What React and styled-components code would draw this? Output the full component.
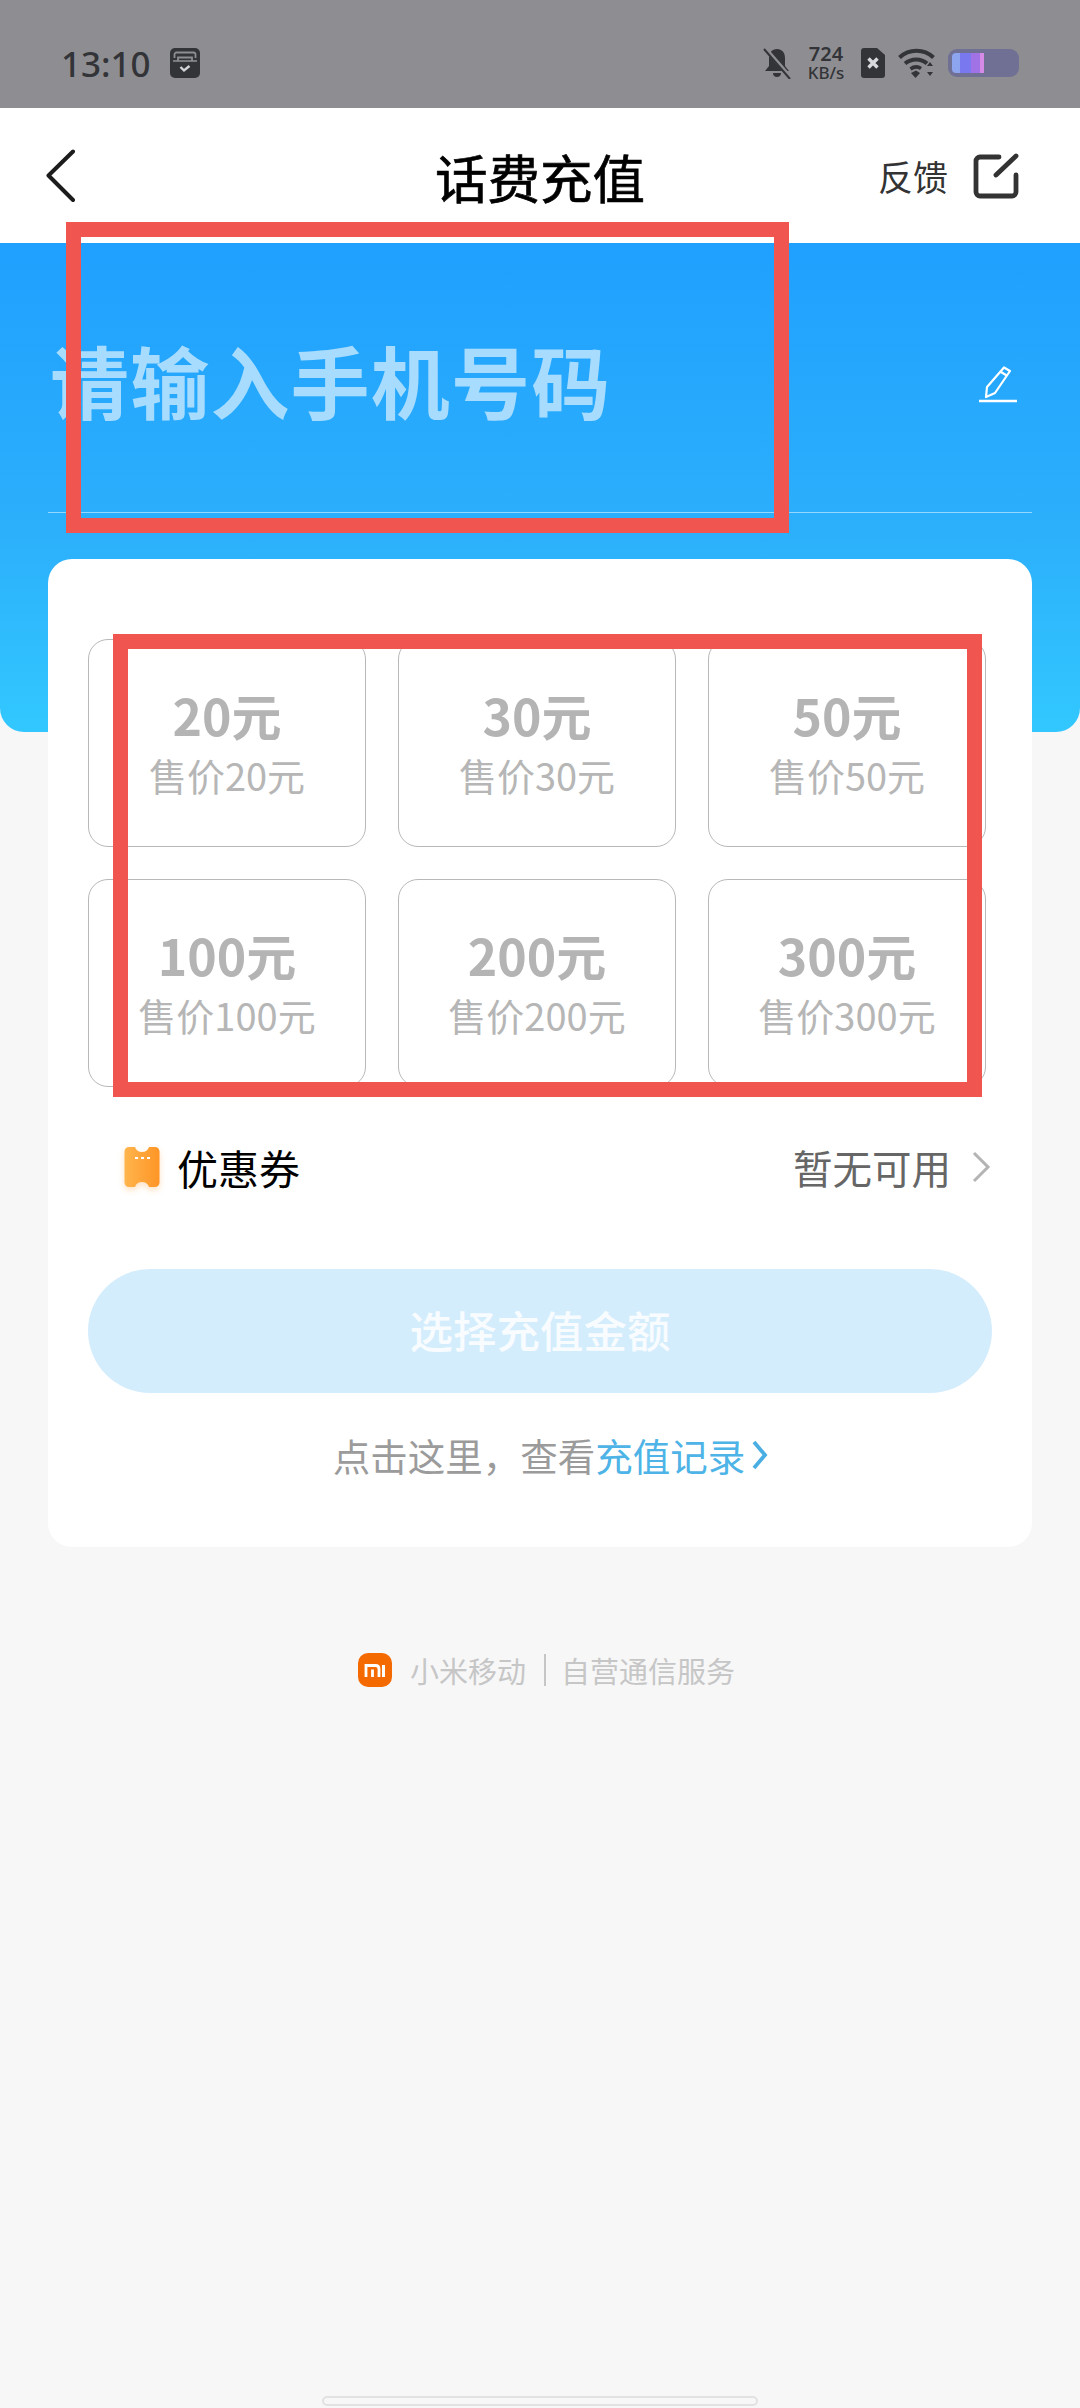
import styled, { createGlobalStyle } from 'styled-components';

const GlobalStyle = createGlobalStyle`
  html, body {
    margin: 0;
    padding: 0;
    background: #f7f7f8;
    font-family: "Noto Sans CJK SC", "Noto Sans", sans-serif;
  }
  * {
    box-sizing: border-box;
  }
`;

const AMOUNTS = [20, 30, 50, 100, 200, 300];

function TopupApp() {
  return (
    <Page>
      <GlobalStyle />
      <StatusBar>
        <StatusLeft>
          <Clock>13:10</Clock>
          <CalendarGlyph />
        </StatusLeft>
        <StatusRight>
          <MutedBell />
          <NetSpeed>
            <strong>724</strong>
            <span>KB/s</span>
          </NetSpeed>
          <SimGlyph />
          <WifiGlyph />
          <Battery>
            <BatteryFill />
          </Battery>
        </StatusRight>
      </StatusBar>

      <NavBar>
        <BackButton>
          <svg width="30" height="54" viewBox="0 0 30 54" fill="none">
            <path
              d="M27 2.500 2.500 26.500 27 51"
              stroke="#1c1c1c"
              strokeWidth="4"
              strokeLinecap="round"
              strokeLinejoin="round"
            />
          </svg>
        </BackButton>
        <NavTitle>话费充值</NavTitle>
        <NavAction>
          <span>反馈</span>
          <svg width="46" height="46" viewBox="0 0 46 46" fill="none">
            <path
              d="M26 4H7a4 4 0 0 0-4 4v31a4 4 0 0 0 4 4h32a4 4 0 0 0 4-4V22"
              stroke="#333"
              strokeWidth="4.800"
              strokeLinecap="round"
            />
            <path d="M23 22 43 3" stroke="#333" strokeWidth="4.800" strokeLinecap="round" />
          </svg>
        </NavAction>
      </NavBar>

      <Hero>
        <PhoneRow>
          <PhonePlaceholder>请输入手机号码</PhonePlaceholder>
          <PencilIcon width="40" height="38" viewBox="0 0 40 38" fill="none">
            <path
              d="M26 2.500 32 6 17 28l-9 4 1-10L26 2.500ZM23 7l6.500 4"
              stroke="#fff"
              strokeWidth="2.200"
              strokeLinejoin="round"
            />
            <path d="M1 36h38" stroke="#fff" strokeWidth="2.600" />
          </PencilIcon>
        </PhoneRow>
        <HeroDivider />
      </Hero>

      <Card>
        <AmountGrid>
          {AMOUNTS.map((value) => (
            <AmountTile key={value}>
              <AmountValue>{value}元</AmountValue>
              <AmountPrice>售价{value}元</AmountPrice>
            </AmountTile>
          ))}
        </AmountGrid>

        <CouponRow>
          <CouponLabel>
            <TicketIcon width="36" height="42" viewBox="0 0 36 42" fill="none">
              <defs>
                <linearGradient id="ticket" x1="0" y1="0" x2="1" y2="0">
                  <stop offset="0" stopColor="#ffb54d" />
                  <stop offset="1" stopColor="#ff9526" />
                </linearGradient>
              </defs>
              <path
                d="M5 1h6c1 3.500 3.500 5 7 5s6-1.500 7-5h6c2.500 0 4.500 2 4.500 4.500v31c0 2.500-2 4.500-4.500 4.500h-6c-1-3.500-3.500-5-7-5s-6 1.500-7 5H5c-2.500 0-4.500-2-4.500-4.500v-31C.5 3 2.500 1 5 1Z"
                fill="url(#ticket)"
              />
              <path d="M11 12h3M17 12h3M23 12h3" stroke="#fff" strokeWidth="2" />
            </TicketIcon>
            <span>优惠券</span>
          </CouponLabel>
          <CouponValue>
            <span>暂无可用</span>
            <svg width="20" height="32" viewBox="0 0 20 32" fill="none">
              <path d="m3 2 14 14L3 30" stroke="#b4b4b4" strokeWidth="3" />
            </svg>
          </CouponValue>
        </CouponRow>

        <SubmitButton type="button">选择充值金额</SubmitButton>

        <HistoryLine>
          点击这里，查看<HistoryLink>充值记录</HistoryLink>
          <svg width="17" height="32" viewBox="0 0 17 32" fill="none">
            <path d="m3 3 11 13L3 29" stroke="#4aaee2" strokeWidth="3.800" />
          </svg>
        </HistoryLine>
      </Card>

      <Footer>
        <svg width="34" height="34" viewBox="0 0 34 34">
          <rect width="34" height="34" rx="10" fill="#f56a00" />
          <path
            d="M8 24V12.500h9.500c2.200 0 3.500 1.300 3.500 3.500v8M14.500 24v-7.500"
            fill="none"
            stroke="#fff"
            strokeWidth="2.800"
          />
          <path d="M25.500 12v12" stroke="#fff" strokeWidth="3" />
        </svg>
        <FooterText>小米移动</FooterText>
        <FooterBar />
        <FooterText>自营通信服务</FooterText>
      </Footer>

      <HomeIndicator />

      {/* red markup boxes drawn over the page */}
      <MarkupBox $left={66} $top={222} $width={723} $height={311} />
      <MarkupBox $left={113} $top={634} $width={869} $height={463} />
    </Page>
  );
}

function CalendarGlyph() {
  return (
    <svg width="30" height="30" viewBox="0 0 30 30" fill="none">
      <rect width="30" height="30" rx="5" fill="#333438" />
      <path d="M4.500 10V6.500a2 2 0 0 1 2-2h17a2 2 0 0 1 2 2V10" stroke="#8e8e92" strokeWidth="1.800" />
      <path d="M8 13V9.500h14V13" stroke="#8e8e92" strokeWidth="1.800" />
      <path d="M3 13h24" stroke="#8e8e92" strokeWidth="1.600" />
      <path d="m10.500 19 3.500 3.500 5.500-4.500" stroke="#d5d5d8" strokeWidth="2.400" />
    </svg>
  );
}

function MutedBell() {
  return (
    <svg width="28" height="32" viewBox="0 0 28 32">
      <path
        d="M14 2c5 0 8 3.500 8 9v8l4 5H2l4-5v-8c0-5.500 3-9 8-9ZM10 26h8c0 2.500-1.500 4-4 4s-4-1.500-4-4Z"
        fill="#333438"
      />
      <path d="M1 0l26 30" stroke="#8e8e92" strokeWidth="4" />
      <path d="M1 2l26 30" stroke="#333438" strokeWidth="2" />
    </svg>
  );
}

function SimGlyph() {
  return (
    <svg width="24" height="30" viewBox="0 0 24 30">
      <path
        d="M3 0h13l8 7v20a3 3 0 0 1-3 3H3a3 3 0 0 1-3-3V3a3 3 0 0 1 3-3Z"
        fill="#333438"
      />
      <path d="m7.500 10.500 9 9m0-9-9 9" stroke="#d9d9dc" strokeWidth="3.400" />
    </svg>
  );
}

function WifiGlyph() {
  return (
    <svg width="37" height="30" viewBox="0 0 37 30" fill="none">
      <path d="M1.500 9.500C11 .5 26 .5 35.500 9.500" stroke="#333438" strokeWidth="4" />
      <path d="M7 15.500c6.500-5.500 16-5.500 22 0" stroke="#333438" strokeWidth="4" />
      <path d="M12.500 21c3.500-2.500 7.500-2.500 10.500-.5" stroke="#333438" strokeWidth="3.600" />
      <path d="m13 25 5-2.500 4 2.500-4.500 5z" fill="#333438" />
      <path d="m29 18 3-4 3 4zM29 24h6l-3 4z" fill="#333438" />
    </svg>
  );
}

const Page = styled.div`
  position: relative;
  width: 1080px;
  height: 2408px;
  overflow: hidden;
  background: #f7f7f8;
`;

const StatusBar = styled.div`
  height: 108px;
  padding: 18px 61px 0;
  background: #8e8e92;
  display: flex;
  align-items: center;
  justify-content: space-between;
`;

const StatusLeft = styled.div`
  display: flex;
  align-items: center;
  gap: 19px;
`;

const Clock = styled.span`
  font-family: "Noto Sans", sans-serif;
  font-size: 35px;
  font-weight: 500;
  line-height: 1;
  color: #333438;
`;

const StatusRight = styled.div`
  display: flex;
  align-items: center;
  gap: 13px;
`;

const NetSpeed = styled.div`
  display: flex;
  flex-direction: column;
  align-items: center;
  width: 44px;
  font-family: "Noto Sans", sans-serif;
  color: #333438;

  strong {
    font-size: 20px;
    font-weight: 600;
    line-height: 20px;
  }
  span {
    font-size: 17px;
    font-weight: 500;
    line-height: 18px;
  }
`;

const Battery = styled.div`
  width: 71px;
  height: 28px;
  padding: 4px;
  border-radius: 9px;
  background: #6f7094;
`;

const BatteryFill = styled.div`
  width: 32px;
  height: 100%;
  border-radius: 4px 0 0 4px;
  background: linear-gradient(
    90deg,
    #8da4ee 0 26%,
    #7a78ee 26% 60%,
    #a172e6 60% 88%,
    #d58ae6 88%
  );
`;

const NavBar = styled.div`
  height: 135px;
  padding: 0 61px;
  background: #fff;
  display: grid;
  grid-template-columns: 1fr auto 1fr;
  align-items: center;
`;

const BackButton = styled.div`
  margin-left: -15px;
  display: flex;
`;

const NavTitle = styled.h1`
  margin: 0;
  font-size: 52.500px;
  font-weight: 400;
  line-height: 60px;
  color: #000;
  -webkit-text-stroke: 0.7px #000;
`;

const NavAction = styled.div`
  justify-self: end;
  display: flex;
  align-items: center;
  gap: 25px;
  font-size: 35px;
  color: #333;
`;

const Hero = styled.div`
  height: 489px;
  padding: 0 48px;
  border-radius: 0 0 24px 24px;
  background: linear-gradient(180deg, #20a0ff 0%, #2cb0fb 60%, #32c8ff 100%);
`;

const PhoneRow = styled.div`
  height: 269px;
  padding: 4px 14px 0 2px;
  display: flex;
  align-items: center;
  justify-content: space-between;
`;

const PhonePlaceholder = styled.div`
  font-size: 79px;
  font-weight: 700;
  line-height: 90px;
  letter-spacing: 1.2px;
  color: #a8dcff;
`;

const PencilIcon = styled.svg`
  margin-top: 8px;
`;

const HeroDivider = styled.div`
  height: 1px;
  background: rgba(255, 255, 255, 0.5);
`;

const Card = styled.div`
  width: 984px;
  height: 988px;
  margin: -173px 0 0 48px;
  padding: 80px 41px 0 40px;
  border-radius: 24px;
  background: #fff;
`;

const AmountGrid = styled.div`
  display: grid;
  grid-template-columns: repeat(3, 278px);
  grid-auto-rows: 208px;
  gap: 32px;
`;

const AmountTile = styled.div`
  padding-top: 4px;
  border: 1px solid #b8b8b8;
  border-radius: 20px;
  display: flex;
  flex-direction: column;
  align-items: center;
  justify-content: center;
`;

const AmountValue = styled.div`
  font-size: 50px;
  font-weight: 700;
  line-height: 60px;
  color: #b4b4b4;
`;

const AmountPrice = styled.div`
  font-size: 38px;
  line-height: 62px;
  color: #b6b6b6;
`;

const CouponRow = styled.div`
  height: 60px;
  margin-top: 50px;
  padding: 0 0 0 36px;
  display: flex;
  align-items: center;
  justify-content: space-between;
`;

const CouponLabel = styled.div`
  display: flex;
  align-items: center;
  gap: 17px;
  font-size: 41px;
  line-height: 60px;
  color: #000;
`;

const TicketIcon = styled.svg`
  filter: drop-shadow(0 3px 3px rgba(255, 170, 80, 0.35));
`;

const CouponValue = styled.div`
  display: flex;
  align-items: center;
  gap: 20px;
  font-size: 39.500px;
  line-height: 60px;
  color: #666;
`;

const SubmitButton = styled.button`
  display: block;
  width: 904px;
  height: 124px;
  margin-top: 72px;
  padding: 0 0 4px;
  border: 0;
  border-radius: 62px;
  background: #d4edfd;
  font-family: inherit;
  font-size: 43.500px;
  font-weight: 500;
  color: rgba(255, 255, 255, 0.85);
`;

const HistoryLine = styled.div`
  margin-top: 34px;
  padding-left: 22px;
  display: flex;
  align-items: center;
  justify-content: center;
  font-size: 37.500px;
  line-height: 56px;
  color: #9b9b9b;

  svg {
    margin-left: 6px;
  }
`;

const HistoryLink = styled.span`
  color: #4eb3e6;
`;

const Footer = styled.div`
  margin-top: 106px;
  padding-left: 358px;
  height: 34px;
  display: flex;
  align-items: center;
  gap: 18px;
`;

const FooterText = styled.span`
  font-size: 29px;
  line-height: 34px;
  color: #c6c6c6;
`;

const FooterBar = styled.i`
  width: 2px;
  height: 32px;
  margin-right: -3px;
  background: #c6c6c6;
`;

const HomeIndicator = styled.div`
  position: absolute;
  left: 322px;
  bottom: 2px;
  width: 436px;
  height: 10px;
  border: 2px solid #e2e2e2;
  border-radius: 5px;
  background: #f7f7f7;
`;

const MarkupBox = styled.div`
  position: absolute;
  left: ${(props) => props.$left}px;
  top: ${(props) => props.$top}px;
  width: ${(props) => props.$width}px;
  height: ${(props) => props.$height}px;
  border: 15px solid #f0554f;
`;

export default TopupApp;
